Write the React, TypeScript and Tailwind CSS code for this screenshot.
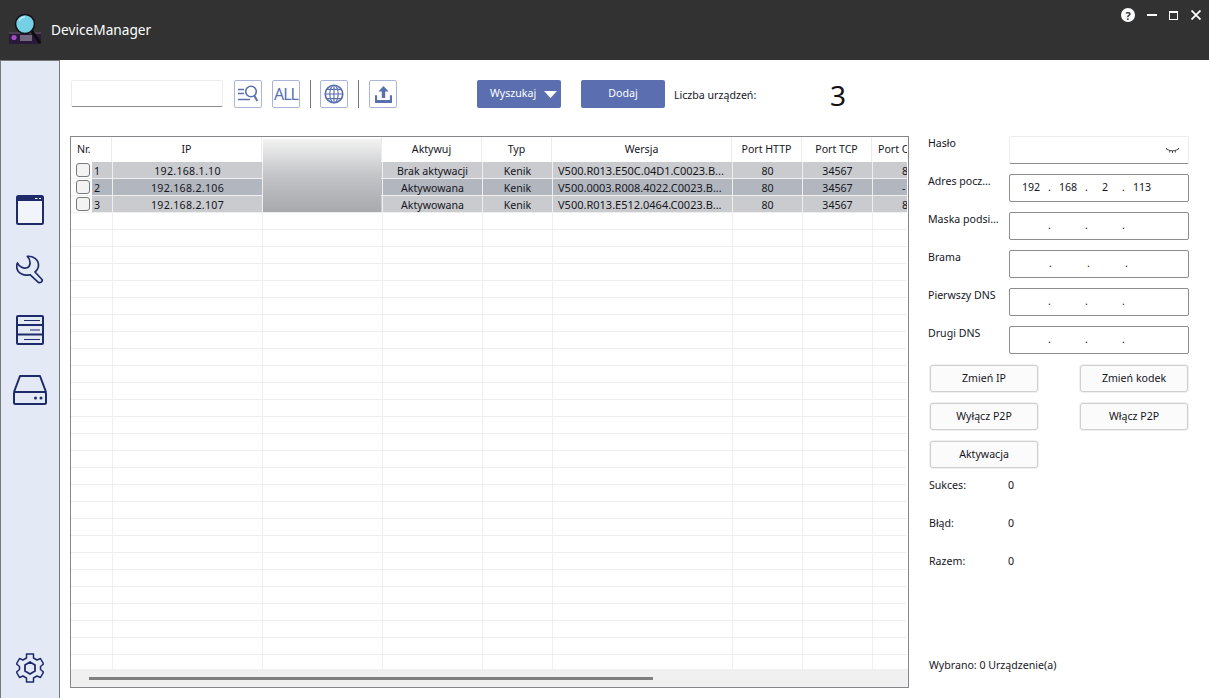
import React from 'react';

const columns = [
  { label: 'Nr.', w: 'w-[41px]', align: 'justify-start pl-[6px]', rowW: 'w-[42px]' },
  { label: 'IP', w: 'w-[150px]', align: 'justify-center', rowW: 'w-[150px]' },
  { label: '', w: 'w-[120px]', align: 'justify-center', rowW: 'w-[120px]' },
  { label: 'Aktywuj', w: 'w-[100px]', align: 'justify-center', rowW: 'w-[100px]' },
  { label: 'Typ', w: 'w-[70px]', align: 'justify-center', rowW: 'w-[70px]' },
  { label: 'Wersja', w: 'w-[180px]', align: 'justify-center', rowW: 'w-[180px]' },
  { label: 'Port HTTP', w: 'w-[70px]', align: 'justify-center', rowW: 'w-[70px]' },
  { label: 'Port TCP', w: 'w-[70px]', align: 'justify-center', rowW: 'w-[70px]' },
  { label: 'Port C', w: 'w-[36px]', align: 'justify-start pl-[6px]', rowW: 'w-[35px]' },
];

const devices = [
  { nr: '1', ip: '192.168.1.10', act: 'Brak aktywacji', typ: 'Kenik', ver: 'V500.R013.E50C.04D1.C0023.B...', http: '80', tcp: '34567', last: '8' },
  { nr: '2', ip: '192.168.2.106', act: 'Aktywowana', typ: 'Kenik', ver: 'V500.0003.R008.4022.C0023.B...', http: '80', tcp: '34567', last: '-' },
  { nr: '3', ip: '192.168.2.107', act: 'Aktywowana', typ: 'Kenik', ver: 'V500.R013.E512.0464.C0023.B...', http: '80', tcp: '34567', last: '8' },
];

const emptyRows = Array.from({ length: 27 }, (_, i) => i);

const Logo = () => (
  <svg width="34" height="34" viewBox="0 0 34 34" className="ml-[8px] mt-[12px] shrink-0">
    <rect x="1" y="20" width="32" height="12" fill="#2a1a3a" />
    <rect x="1" y="20" width="32" height="2" fill="#4a3f55" />
    <circle cx="6" cy="25.500" r="2.600" fill="#a44bc4" />
    <path d="M12 24h12M12 26h12M12 28h12" stroke="#b9b4c0" strokeWidth="1" />
    <path d="M23 18l9 13" stroke="#0c0c0c" strokeWidth="3" />
    <circle cx="17" cy="12" r="9.500" fill="#74d0e4" stroke="#111" strokeWidth="1.600" />
    <path d="M11 9a7 7 0 0 1 6-4" stroke="#b8ecf5" strokeWidth="1.500" fill="none" />
  </svg>
);

const WindowIcon = () => (
  <svg width="30" height="30" viewBox="0 0 30 30">
    <rect x="2" y="1" width="26" height="28" rx="1.500" fill="#f1f4fa" stroke="#1f2a6b" strokeWidth="2" />
    <rect x="2" y="1" width="26" height="5" fill="#1f2a6b" />
    <path d="M20 3.500h2.500M24 3.500h2" stroke="#fff" strokeWidth="1" />
  </svg>
);

const WrenchIcon = () => (
  <svg width="28" height="30" viewBox="0 0 28 30" fill="none" stroke="#1f2a6b" strokeWidth="1.700" strokeLinejoin="round">
    <path d="M11.300 1.300C17 0.800 22.500 4.500 22.500 10C22.500 13 21 15.500 19 17L26 24.500C27 26.500 24 28.500 22.300 27.300L14 19.700C8 21.500 1 18 0.800 12C0.700 10.500 1 9 1.500 8C3 12 8 14 11 12.800C14.500 11.500 15.500 6 11.300 1.300Z" />
  </svg>
);

const ServerIcon = () => (
  <svg width="28" height="30" viewBox="0 0 28 30" fill="none" stroke="#1f2a6b" strokeWidth="1.600">
    <rect x="1" y="1" width="26" height="28" rx="1" strokeWidth="2" />
    <path d="M1 10h26M1 19.500h26" strokeWidth="2" />
    <path d="M8 5.500h16M14 15h10M8 24.500h16" strokeWidth="1.200" />
  </svg>
);

const DriveIcon = () => (
  <svg width="34" height="30" viewBox="0 0 34 30" fill="none" stroke="#1f2a6b" strokeWidth="2" strokeLinejoin="round">
    <path d="M1 17L7 1h20l6 16" />
    <rect x="1" y="17" width="32" height="12" rx="1.500" />
    <circle cx="22.500" cy="23" r="1.500" fill="#1f2a6b" stroke="none" />
    <circle cx="28" cy="23" r="1.500" fill="#1f2a6b" stroke="none" />
  </svg>
);

const GearIcon = () => (
  <svg width="28" height="30" viewBox="0 0 28 30" fill="none" stroke="#1f2a6b" strokeWidth="1.500" strokeLinejoin="round">
    <path d="M10.500 1h7v4l3.500 2 3.500-1.500 3 5.500-3 2.500v3l3 2.500-3 5.500-3.500-1.500-3.500 2v4h-7v-4l-3.500-2-3.500 1.500-3-5.500 3-2.500v-3l-3-2.500 3-5.500 3.500 1.500 3.500-2z" />
    <path d="M14 9l5 3v6l-5 3-5-3v-6z" strokeWidth="1.800" />
  </svg>
);

const SearchListIcon = () => (
  <svg width="20" height="18" viewBox="0 0 20 18" fill="none" stroke="#5a6fb0" strokeWidth="1.600">
    <path d="M0 4.500h6M0 8.500h6M0 14.500h12" />
    <circle cx="13" cy="6.500" r="5.300" />
    <path d="M16.500 11l2.800 5" strokeWidth="2" />
  </svg>
);

const GlobeIcon = () => (
  <svg width="20" height="20" viewBox="0 0 24 24" fill="none" stroke="#5a6fb0" strokeWidth="1.400">
    <circle cx="12" cy="12" r="10.500" strokeWidth="2" />
    <ellipse cx="12" cy="12" rx="5" ry="10.500" />
    <path d="M12 1.500v21M1.500 12h21M3 6.500h18M3 17.500h18" />
  </svg>
);

const UploadIcon = () => (
  <svg width="17" height="17" viewBox="0 0 20 20" fill="#5a6fb0">
    <path d="M10 0l6 6.500h-4V14H8V6.500H4z" />
    <path d="M0 11h2.500v5.500h15V11H20v8a1 1 0 0 1-1 1H1a1 1 0 0 1-1-1z" />
  </svg>
);

const ClosedEye = () => (
  <svg width="15" height="7" viewBox="0 0 15 7" fill="none" stroke="#333" strokeWidth="0.900">
    <path d="M1 1.500c3 3 10 3 13 0M1 1l1.500 1.500M14 1l-1.500 1.500M5 3.500L4.500 5.500M10 3.500l.5 2M7.500 4v2" />
  </svg>
);

const ToolButton = ({ children }: { children: React.ReactNode }) => (
  <button className="flex h-[28px] w-[28px] items-center justify-center overflow-hidden rounded-[2px] border border-[#aab6d9] bg-white">
    {children}
  </button>
);

const IpInput = ({ octets = ['', '', '', ''], pitch = 'w-[34px]' }: { octets?: string[]; pitch?: string }) => (
  <div className="flex h-[28px] w-[180px] items-center rounded-[2px] border border-[#8c8c8c] bg-white pl-[4px]">
    {octets.map((o, i) => (
      <React.Fragment key={i}>
        <span className={`${pitch} text-center`}>{o}</span>
        {i < 3 && <span className="w-[3px] text-center">.</span>}
      </React.Fragment>
    ))}
  </div>
);

const FormRow = ({ label, children }: { label: string; children: React.ReactNode }) => (
  <div className="flex h-[28px]">
    <div className="w-[81px] whitespace-nowrap leading-[14px]">{label}</div>
    {children}
  </div>
);

const ActionButton = ({ children }: { children: React.ReactNode }) => (
  <button className="h-[27px] w-[108px] rounded-[3px] border border-[#cfcfcf] bg-[#fbfbfb] text-center ring-1 ring-[#f0f0f0]">
    {children}
  </button>
);

const Stat = ({ label }: { label: string }) => (
  <div className="flex h-[14px] items-center">
    <span className="w-[79px]">{label}</span>
    <span>0</span>
  </div>
);

const App: React.FC = () => {
  return (
    <div className="flex h-[698px] w-[1209px] flex-col overflow-hidden bg-white font-['Noto_Sans',sans-serif] text-[10.6px] text-[#16161e]">
      <header className="flex h-[60px] shrink-0 bg-[#323232]">
        <Logo />
        <span className="ml-[9px] mt-[19px] text-[13.7px] leading-[22px] text-white">DeviceManager</span>
        <div className="ml-auto mr-[8px] mt-[8px] flex h-[14px] items-center">
          <span className="flex h-[14px] w-[14px] items-center justify-center rounded-full bg-white text-[11px] font-bold leading-none text-[#323232]">?</span>
          <span className="ml-[12px] h-[2px] w-[10px] bg-white"></span>
          <span className="ml-[12px] h-[9px] w-[9px] border border-t-2 border-white"></span>
          <svg width="10" height="10" viewBox="0 0 10 10" className="ml-[13px]" stroke="#fff" strokeWidth="1.800">
            <path d="M0.500 0.500l9 9M9.500 0.500l-9 9" />
          </svg>
        </div>
      </header>

      <div className="flex min-h-0 flex-1">
        <aside className="flex w-[60px] shrink-0 flex-col items-center border-x border-t border-[#77797d] bg-[#e3eaf5] pt-[119px]">
          <div className="flex h-[60px] items-center"><WindowIcon /></div>
          <div className="flex h-[60px] items-center"><WrenchIcon /></div>
          <div className="flex h-[60px] items-center"><ServerIcon /></div>
          <div className="flex h-[60px] items-center"><DriveIcon /></div>
          <div className="mt-auto flex h-[60px] items-center"><GearIcon /></div>
        </aside>

        <main className="flex min-w-0 flex-1 flex-col pl-[10px] pt-[20px]">
          <div className="flex h-[28px] shrink-0 items-center">
            <div className="ml-[1px] h-[27px] w-[152px] self-start rounded-[2px] border border-[#ececec] border-b-[#8c8c8c] bg-white"></div>
            <div className="ml-[11px]"><ToolButton><SearchListIcon /></ToolButton></div>
            <div className="ml-[10px]">
              <ToolButton>
                <span className="whitespace-nowrap text-[16px] leading-none tracking-[-1px] text-[#5a6fb0]">ALL</span>
              </ToolButton>
            </div>
            <div className="ml-[10px] h-[28px] w-px bg-[#77797d]"></div>
            <div className="ml-[9px]"><ToolButton><GlobeIcon /></ToolButton></div>
            <div className="ml-[10px] h-[28px] w-px bg-[#77797d]"></div>
            <div className="ml-[10px]"><ToolButton><UploadIcon /></ToolButton></div>
            <button className="ml-[80px] flex h-[28px] w-[84px] items-center rounded-[2px] bg-[#5a6eb0] pl-[13px] text-white">
              Wyszukaj
              <svg width="13" height="7" viewBox="0 0 13 7" className="ml-[8px]"><path d="M0 0h13L6.500 7z" fill="#fff" /></svg>
            </button>
            <button className="ml-[20px] h-[28px] w-[84px] rounded-[2px] bg-[#5a6eb0] text-white">Dodaj</button>
            <span className="ml-[9px] mt-[3px] w-[156px]">Liczba urządzeń:</span>
            <span className="mt-[2px] text-[28px] leading-none text-[#111]">3</span>
          </div>

          <div className="mt-[28px] flex min-h-0 flex-1 pb-[10px]">
            <div className="relative flex h-[552px] w-[839px] shrink-0 flex-col overflow-hidden border border-[#85878b] bg-white pr-[1px]">
              <div className="flex h-[25px] shrink-0 overflow-hidden">
                {columns.map((c) => (
                  <div key={c.label} className={`${c.w} ${c.align} flex shrink-0 items-center whitespace-nowrap border-r border-[#ececec] pt-[1px] last:border-r-0`}>{c.label}</div>
                ))}
              </div>
              {devices.map((d, i) => {
                const bg = i === 1 ? 'bg-[#b2b7bf]' : 'bg-[#c9cbce]';
                return (
                  <div key={d.nr} className="flex h-[17px] shrink-0 overflow-hidden border-b border-[#efefef] leading-[18px]">
                    <div className="flex w-[42px] shrink-0 items-center border-r border-[#efefef]">
                      <span className="ml-[5px] h-[14px] w-[14px] rounded-[3px] border border-[#77797d] bg-[#f3f3f3]"></span>
                      <span className={`ml-[2px] flex h-full flex-1 items-center pl-[2px] pt-[1px] ${bg}`}>{d.nr}</span>
                    </div>
                    <div className={`w-[150px] shrink-0 border-r border-[#efefef] text-center tracking-[0.3px] ${bg}`}>{d.ip}</div>
                    <div className={`w-[120px] shrink-0 border-r border-[#efefef] ${bg}`}></div>
                    <div className={`w-[100px] shrink-0 border-r border-[#efefef] text-center ${bg}`}>{d.act}</div>
                    <div className={`w-[70px] shrink-0 border-r border-[#efefef] text-center ${bg}`}>{d.typ}</div>
                    <div className={`w-[180px] shrink-0 whitespace-nowrap border-r border-[#efefef] pl-[5px] text-[11px] ${bg}`}>{d.ver}</div>
                    <div className={`w-[70px] shrink-0 border-r border-[#efefef] text-center ${bg}`}>{d.http}</div>
                    <div className={`w-[70px] shrink-0 border-r border-[#efefef] text-center ${bg}`}>{d.tcp}</div>
                    <div className={`w-[35px] shrink-0 pl-[29px] ${bg}`}>{d.last}</div>
                  </div>
                );
              })}
              {emptyRows.map((r) => (
                <div key={r} className="flex h-[17px] shrink-0 overflow-hidden border-b border-[#efefef]">
                  {columns.map((c) => (
                    <div key={c.label} className={`${c.rowW} shrink-0 border-r border-[#efefef] last:border-r-0`}></div>
                  ))}
                </div>
              ))}
              <div className="absolute inset-x-0 bottom-0 flex h-[18px] items-center bg-[#f0f0f0] pl-[18px]">
                <div className="h-[3px] w-[564px] bg-[#808080]"></div>
              </div>
              <div className="absolute left-[192px] top-[2px] h-[73px] w-[118px] bg-linear-to-b from-[#f3f3f3] via-[#c3c4c7] to-[#a8a9ad]"></div>
            </div>

            <section className="flex h-[552px] flex-1 flex-col pb-[14px] pl-[19px]">
              <div className="flex flex-col gap-[10px]">
                <FormRow label="Hasło">
                  <div className="flex h-[28px] w-[180px] items-center justify-end rounded-[2px] border border-[#ececec] border-b-[#8c8c8c] bg-white pr-[8px]">
                    <ClosedEye />
                  </div>
                </FormRow>
                <FormRow label="Adres pocz…"><IpInput octets={['192', '168', '2', '113']} /></FormRow>
                <FormRow label="Maska podsi…"><IpInput /></FormRow>
                <FormRow label="Brama"><IpInput pitch="w-[35px]" /></FormRow>
                <FormRow label="Pierwszy DNS"><IpInput /></FormRow>
                <FormRow label="Drugi DNS"><IpInput /></FormRow>
              </div>
              <div className="ml-[2px] mt-[11px] grid w-[258px] grid-cols-[108px_108px] justify-between gap-y-[11px]">
                <ActionButton>Zmień IP</ActionButton>
                <ActionButton>Zmień kodek</ActionButton>
                <ActionButton>Wyłącz P2P</ActionButton>
                <ActionButton>Włącz P2P</ActionButton>
                <ActionButton>Aktywacja</ActionButton>
              </div>
              <div className="ml-[1px] mt-[11px] flex flex-col gap-[24px]">
                <Stat label="Sukces:" />
                <Stat label="Błąd:" />
                <Stat label="Razem:" />
              </div>
              <div className="ml-[1px] mt-auto">Wybrano: 0 Urządzenie(a)</div>
            </section>
          </div>
        </main>
      </div>
    </div>
  );
};

export default App;
